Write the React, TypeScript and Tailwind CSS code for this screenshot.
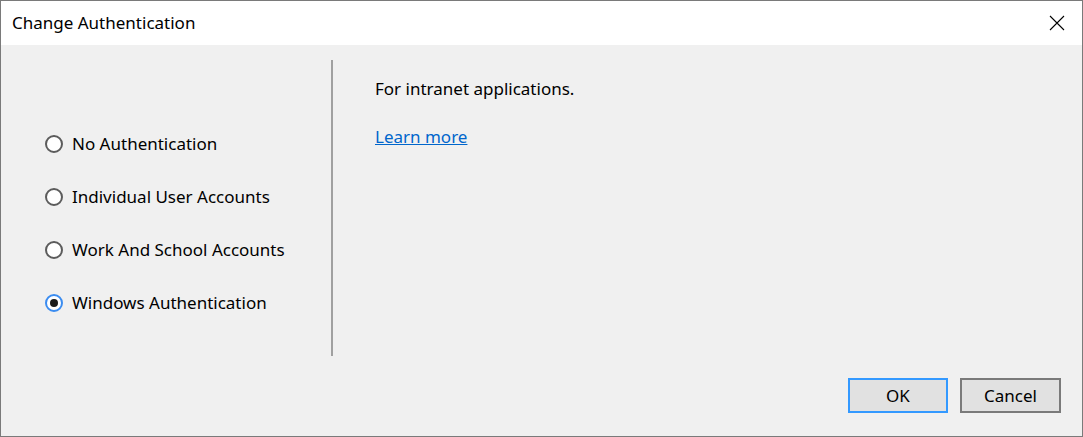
import React from "react";

const options = [
  { label: "No Authentication", checked: false },
  { label: "Individual User Accounts", checked: false },
  { label: "Work And School Accounts", checked: false },
  { label: "Windows Authentication", checked: true },
];

const Radio = ({ checked }: { checked: boolean }) => (
  <span
    className={
      checked
        ? "w-[18px] h-[18px] rounded-full border-2 border-[#3b8cf0] bg-white flex items-center justify-center"
        : "w-[18px] h-[18px] rounded-full border-2 border-[#5c5c5c] bg-white flex items-center justify-center"
    }
  >
    {checked && <span className="w-[8px] h-[8px] rounded-full bg-[#1a1a1a]"></span>}
  </span>
);

export default function App() {
  return (
    <div
      className="w-[1083px] h-[437px] border border-[#7a7a7a] flex flex-col text-black"
      style={{ fontFamily: '"Noto Sans", "Open Sans", sans-serif' }}
    >
      <div className="h-[44px] bg-white flex items-center justify-between pl-[11px] pr-[17px]">
        <span className="text-[17px]">Change Authentication</span>
        <svg width="16" height="16" viewBox="0 0 16 16" className="text-black">
          <path d="M1 1 L15 15 M15 1 L1 15" stroke="currentColor" strokeWidth="1.1" fill="none" />
        </svg>
      </div>

      <div className="flex-1 bg-[#f0f0f0] flex flex-col">
        <div className="flex pt-[15px]">
          <div className="w-[332px] h-[296px] border-r-2 border-[#a0a0a0] flex flex-col gap-[31px] pl-[44px] pt-[73px]">
            {options.map((o) => (
              <label key={o.label} className="h-[22px] flex items-center gap-[9px] text-[17px]">
                <Radio checked={o.checked} />
                <span>{o.label}</span>
              </label>
            ))}
          </div>
          <div className="pl-[42px] pt-[18px] flex flex-col gap-[26px] text-[17px]">
            <p className="leading-[22px]">For intranet applications.</p>
            <a href="#" className="leading-[22px] text-[#0066cc] underline">
              Learn more
            </a>
          </div>
        </div>

        <div className="mt-auto mb-[23px] pr-[21px] flex justify-end gap-[12px]">
          <button className="w-[100px] h-[35px] bg-[#e1e1e1] border-2 border-[#3399ff] text-[17px]">
            OK
          </button>
          <button className="w-[101px] h-[35px] bg-[#e1e1e1] border-2 border-[#7a7a7a] text-[17px]">
            Cancel
          </button>
        </div>
      </div>
    </div>
  );
}
